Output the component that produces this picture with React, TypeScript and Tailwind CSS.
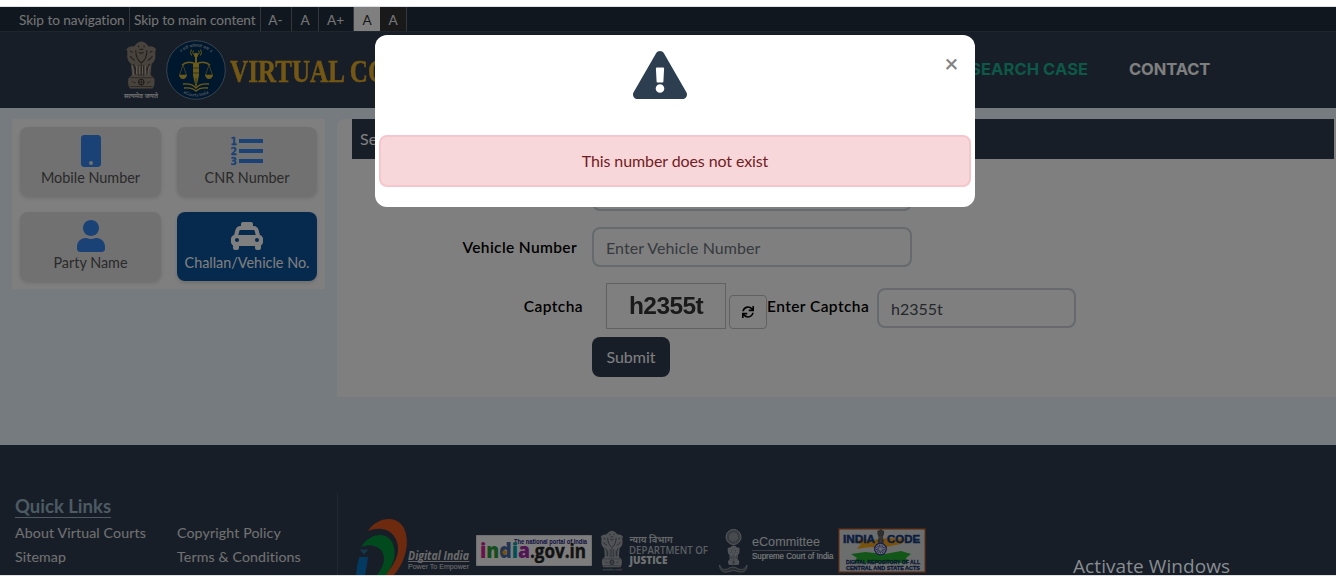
import React from "react";
import { FaExclamationTriangle, FaMobile, FaSync, FaTaxi, FaUser } from "react-icons/fa";

const deva = "'Noto Sans Devanagari','Noto Sans',sans-serif";

function Lions({ fill, dark }: { fill: string; dark: string }) {
  return (
    <g>
      <path d="M12 3 Q17 -1 22 3 L25 6 Q30 5 33 9 Q31 11 32 14 Q33 20 28 24 L27 35 L31 39 Q32 46 29 49 L5 49 Q2 46 3 39 L7 35 L6 24 Q1 20 2 14 Q3 11 1 9 Q4 5 9 6Z" fill={fill} />
      <path d="M11 27v8M14.500 25v11M19.500 25v11M23 27v8M17 24v12" stroke={dark} strokeWidth="1" opacity=".7" />
      <path d="M11 10q0 9 6 13q6-4 6-13M14 5v2M20 5v2M15 9h4M14.500 12q2.500 2 5 0M5 11l3 1M29 11l-3 1M5 16q3 4 5 4M29 16q-3 4-5 4M8 24q3 3 2 10M26 24q-3 3-2 10" fill="none" stroke={dark} strokeWidth="1.200" opacity=".75" />
      <path d="M5 38h24M5 47h24" stroke={dark} opacity=".55" />
      <circle cx="17" cy="42.500" r="3" fill="none" stroke={dark} />
      <path d="M17 39.500v6M14 42.500h6M7 41q2 3 4 2M27 41q-2 3-4 2" stroke={dark} strokeWidth=".8" fill="none" opacity=".8" />
    </g>
  );
}

function Emblem() {
  return (
    <svg width="36" height="62" viewBox="0 0 36 62" className="shrink-0 overflow-visible">
      <g transform="translate(1.500 1.500) scale(.93 .98)"><Lions fill="#93877a" dark="#2c2622" /></g>
      <path d="M8 27q2 5 1.500 9M25.500 27q-2 5-1.500 9M12.500 27v8M15.500 27v8M18.500 27v8M21.500 27v8" stroke="#c9bfb2" strokeWidth=".8" fill="none" />
      <text x="0" y="59" fontSize="7" fontWeight="600" textLength="34" lengthAdjust="spacingAndGlyphs" fill="#e0e0e0" fontFamily={deva}>सत्यमेव जयते</text>
    </svg>
  );
}

function CourtSeal() {
  return (
    <svg width="60" height="61" viewBox="0 0 60 61" className="shrink-0">
      <defs>
        <path id="sealTop" d="M7 30a23 23 0 0 1 46 0" />
        <path id="sealBottom" d="M3.500 30a26.500 26.500 0 0 0 53 0" />
      </defs>
      <circle cx="30" cy="30" r="29.300" fill="#00305c" stroke="#8299ad" strokeWidth=".8" />
      <text fontSize="4" fill="#cdd5dd" fontFamily={deva}><textPath href="#sealTop" startOffset="50%" textAnchor="middle">॥ यतो धर्मस्ततो जयः ॥</textPath></text>
      <text fontSize="4.500" fill="#cdd5dd" fontFamily="Lato,sans-serif"><textPath href="#sealBottom" startOffset="50%" textAnchor="middle">eCourts India</textPath></text>
      <g fill="none" stroke="#d6b634" strokeWidth="1">
        <path d="M27.500 10.500q-1.500 2 0 4M25.500 9.500q-2 3 0 6M32.500 10.500q1.500 2 0 4M34.500 9.500q2 3 0 6" />
        <path d="M16 25q6-5 14-1q8-4 14 1" strokeWidth="1.600" />
        <path d="M17 25l-3.500 10h7zM43 25l-3.500 10h7z" strokeWidth=".6" />
        <path d="M17 44q9-1 13 4q4-5 13-4M18 48q8-1 12 3q4-4 12-3" strokeWidth="1.300" />
      </g>
      <path d="M27 24h6v11l-1.500 7l-1.500 6l-1.500-6l-1.500-7z" fill="#d6b634" />
      <path d="M27 28h6M27 33h6M30 38v6" stroke="#4d5028" strokeWidth=".8" />
      <circle cx="30" cy="15" r="2.200" fill="#d6b634" />
      <path d="M29 14h2v9h-2zM13 35h8q-1 4-4 4t-4-4M39 35h8q-1 4-4 4t-4-4" fill="#d6b634" />
    </svg>
  );
}

function NumberedList() {
  return (
    <svg width="32" height="32" viewBox="0 0 32 32" fill="currentColor">
      <path d="M8 4h24v4H8zM8 14h24v4H8zM8 24h24v4H8z" />
      <g fontFamily="DejaVu Sans,sans-serif" fontWeight="700" fontSize="10" stroke="currentColor" strokeWidth=".3">
        <text x="-.5" y="9.500" textLength="6.500" lengthAdjust="spacingAndGlyphs">1</text>
        <text x="-.5" y="19.500" textLength="6.500" lengthAdjust="spacingAndGlyphs">2</text>
        <text x="-.5" y="29.500" textLength="6.500" lengthAdjust="spacingAndGlyphs">3</text>
      </g>
    </svg>
  );
}

function DigitalIndia() {
  return (
    <svg width="114" height="60" viewBox="356 516 114 60" className="shrink-0 overflow-visible">
      <path d="M368 531C376 519 392 515 401 524C411 535 408 560 393 576H384C398 562 402 547 394 536C388 528 378 527 368 531Z" fill="#dc541c" />
      <path d="M361 547C371 532 386 532 392 542C398 554 393 566 385 576H376C385 566 386 556 381 550C376 545 369 544 361 547Z" fill="#00943c" />
      <path d="M359.500 557H368L365 576H356Q357 564 359.500 557Z" fill="#0874c4" />
      <path d="M360 550l2-1 2 1 2-1 2 1-4 4.500z" fill="#28709a" />
      <text x="408" y="560" fontFamily="Open Sans,sans-serif" fontSize="11.500" fontWeight="700" fontStyle="italic" fill="#d4d4d4" textLength="61" lengthAdjust="spacingAndGlyphs">Digital India</text>
      <path d="M408 561.500h61.500" stroke="#c8c8c8" />
      <text x="408" y="568.500" fontFamily="Liberation Sans,sans-serif" fontSize="7.500" fill="#e0e0e0" textLength="61" lengthAdjust="spacingAndGlyphs">Power To Empower</text>
    </svg>
  );
}

function IndiaGov() {
  return (
    <svg width="116" height="31" viewBox="0 0 116 31" className="shrink-0">
      <path d="M.5.5h115v30H.500z" fill="#fafafa" stroke="#e0e0e0" />
      <text x="38" y="8.500" fontSize="7" fontFamily="Liberation Sans,sans-serif" fontWeight="700" fill="#25207c" textLength="73" lengthAdjust="spacingAndGlyphs">The national portal of India</text>
      <g fontFamily="Open Sans,sans-serif" strokeWidth=".4">
        <text x="4" y="23" fontSize="21" fontWeight="800" textLength="50" lengthAdjust="spacingAndGlyphs">
          <tspan fill="#ce249b">i</tspan><tspan fill="#2c9b38">n</tspan><tspan fill="#4669a4">d</tspan><tspan fill="#00a1ac">i</tspan><tspan fill="#a32ba7">a</tspan>
        </text>
        <text x="54" y="23" fontSize="20" fontWeight="700" fill="#242424" stroke="#242424" textLength="56" lengthAdjust="spacingAndGlyphs">.gov.in</text>
      </g>
      <circle cx="28.500" cy="17.500" r="2.200" fill="#e7a41b" />
    </svg>
  );
}

function DeptJustice() {
  return (
    <svg width="108" height="44" viewBox="600 529 108 44" className="shrink-0 overflow-visible">
      <g transform="translate(600 530) scale(.7 .76)"><Lions fill="#a0a5ab" dark="#303b48" /></g>
      <text x="603" y="571" fontSize="3.500" textLength="19" lengthAdjust="spacingAndGlyphs" fill="#a0a5ab" fontFamily={deva}>सत्यमेव जयते</text>
      <text x="629.500" y="542.500" fontSize="9" fontWeight="600" textLength="43" lengthAdjust="spacingAndGlyphs" fill="#cfd2d5" fontFamily={deva}>न्याय विभाग</text>
      <text x="629" y="553.500" fontSize="10" fontWeight="600" textLength="79" lengthAdjust="spacingAndGlyphs" fill="#b9bec4" fontFamily="Open Sans,sans-serif">DEPARTMENT OF</text>
      <text x="629.500" y="564" fontSize="10" fontWeight="800" textLength="38" lengthAdjust="spacingAndGlyphs" fill="#dfe1e4" fontFamily="Open Sans,sans-serif">JUSTICE</text>
    </svg>
  );
}

function ECommittee() {
  return (
    <svg width="115" height="46" viewBox="719 528 115 46" className="shrink-0 overflow-visible">
      <circle cx="733.500" cy="537" r="7.500" fill="#737b84" stroke="#aab0b6" />
      <circle cx="733.500" cy="537" r="5" fill="#8f969e" stroke="#5c6570" strokeDasharray="1 1" />
      <g transform="translate(727 545) scale(.39 .41)"><Lions fill="#aab0b6" dark="#303b48" /></g>
      <path d="M719.500 565q2 6 8 4q5-4 11 0q6 2 8.500-4q0 8-7.500 7q-6-3-12.500 0q-7 1-7.500-7z" fill="#535d68" stroke="#aab0b6" strokeWidth=".7" />
      <text x="752" y="546" fontSize="12.500" textLength="68" lengthAdjust="spacingAndGlyphs" fill="#e0e3e6" fontFamily="Liberation Sans,sans-serif">eCommittee</text>
      <path d="M752 550.500h68" stroke="#7c8590" />
      <text x="752" y="559" fontSize="8.500" textLength="81.500" lengthAdjust="spacingAndGlyphs" fill="#f2f4f6" stroke="#f2f4f6" strokeWidth=".15" fontFamily="Liberation Sans,sans-serif">Supreme Court of India</text>
    </svg>
  );
}

function IndiaCode() {
  return (
    <svg width="88" height="45" viewBox="838 528 88 45" className="shrink-0 overflow-visible">
      <path d="M838.700 528.700h86.600v43.600h-86.600z" fill="#d9dadb" stroke="#984820" strokeWidth="1.400" />
      <path d="M852 541l10-2 11 1 14-2 21 1-7 5-10 2-9 2-12-1-13 2 4-5z" fill="#f3a51c" />
      <path d="M851 554l14-2 20 2 16-3 10 3-5 4 2 5h-55l4-5z" fill="#27ae31" />
      <text x="843" y="542.500" fontSize="10.500" fontWeight="700" fill="#173c82" stroke="#173c82" strokeWidth=".5" textLength="32" lengthAdjust="spacingAndGlyphs" fontFamily="Liberation Sans,sans-serif">INDIA</text>
      <text x="887" y="542.500" fontSize="10.500" fontWeight="700" fill="#173c82" stroke="#173c82" strokeWidth=".5" textLength="33" lengthAdjust="spacingAndGlyphs" fontFamily="Liberation Sans,sans-serif">CODE</text>
      <g transform="translate(877 529) scale(.22 .28)"><Lions fill="#4e4e4e" dark="#c8c8c8" /></g>
      <circle cx="880.500" cy="549" r="5.800" fill="#dadce4" stroke="#2e38a0" strokeWidth="1.300" />
      <circle cx="880.500" cy="549" r="3" fill="none" stroke="#2e38a0" strokeWidth="3" strokeDasharray=".6 .8" />
      <text x="846" y="563.500" fontSize="5.800" fontWeight="700" fill="#132e66" stroke="#132e66" strokeWidth=".3" textLength="74" lengthAdjust="spacingAndGlyphs" fontFamily="Liberation Sans,sans-serif">DIGITAL REPOSITORY OF ALL</text>
      <text x="846" y="569.800" fontSize="5.800" fontWeight="700" fill="#132e66" stroke="#132e66" strokeWidth=".3" textLength="74" lengthAdjust="spacingAndGlyphs" fontFamily="Liberation Sans,sans-serif">CENTRAL AND STATE ACTS</text>
    </svg>
  );
}

function Tile({ icon, label, active }: { icon: React.ReactNode; label: string; active?: boolean }) {
  return (
    <button className={`flex h-[69px] flex-col items-center rounded-lg pt-2 shadow-[0_2px_4px_rgba(0,0,0,0.15)] ${active ? "bg-[#0c529c] text-white" : "bg-[#e2e2e2] text-[#3684ee]"}`}>
      <span className="flex h-8 items-center">{icon}</span>
      <span className={`mt-[1px] whitespace-nowrap text-[14.4px] leading-[20px] ${active ? "text-white" : "text-[#555]"}`}>{label}</span>
    </button>
  );
}

export default function App() {
  return (
    <div className="flex h-[580px] w-[1336px] flex-col overflow-hidden bg-white font-['Lato',sans-serif]">
      <div className="h-[7px] shrink-0 border-b border-[#dfe2e4]" />
      <div className="relative flex h-[568px] shrink-0 flex-col overflow-hidden bg-[#ecf6fe]">
        <div className="flex h-[25px] shrink-0 border-b border-[#3e4c58] bg-[#202f3e] pl-[14px] text-[13.600px] leading-[26px] text-[#e8e8e8]">
          <a className="w-[116px] whitespace-nowrap border-r border-[#68717b] pl-[5px] tracking-[-0.03px]">Skip to navigation</a>
          <a className="w-[131px] whitespace-nowrap border-r border-[#68717b] pl-1 tracking-[-0.06px]">Skip to main content</a>
          <a className="w-[31px] border-r border-[#68717b] pr-px text-center">A-</a>
          <a className="w-[27px] border-r border-[#68717b] text-center">A</a>
          <a className="w-[35px] border-r border-[#68717b] pr-px text-center">A+</a>
          <a className="h-6 w-[26px] bg-white text-center text-[#333]">A</a>
          <a className="h-6 w-[27px] border-r border-[#68717b] bg-[#333] text-center">A</a>
        </div>
        <header className="flex h-[76px] shrink-0 items-center bg-[#2e3d50] pl-[124px]">
          <Emblem />
          <div className="ml-[6px]"><CourtSeal /></div>
          <div className="ml-[4px] w-[659px] origin-left scale-x-[0.81] whitespace-nowrap pt-[4px] font-['Liberation_Serif',serif] text-[31px] font-bold text-[#e9ae28] [-webkit-text-stroke:0.5px_#e9ae28]">VIRTUAL COURTS</div>
          <nav className="ml-[81px] flex items-center whitespace-nowrap pb-[2px] font-['Inter',sans-serif] text-[16.500px] font-bold">
            <a className="w-[159px] tracking-[0.1px] text-[#1ab08c]">SEARCH CASE</a>
            <a className="tracking-[-0.1px] text-white">CONTACT</a>
          </nav>
        </header>
        <main className="flex h-[337px] shrink-0 items-start pl-3 pt-[11px]">
          <section className="grid h-[170px] w-[313px] grid-cols-[141px_140px] content-start gap-4 bg-white p-2">
            <Tile icon={<FaMobile size={32} />} label="Mobile Number" />
            <Tile icon={<NumberedList />} label="CNR Number" />
            <Tile icon={<FaUser size={32} />} label="Party Name" />
            <Tile active icon={<FaTaxi size={32} />} label="Challan/Vehicle No." />
          </section>
          <section className="ml-3 flex h-[278px] flex-1 flex-col rounded-tl-lg bg-white pl-[15px] pr-[2px] text-[16px] text-black">
            <h1 className="h-10 bg-[#2e3d50] pl-2 leading-10 text-white">Search by Challan/Vehicle No.</h1>
            <div className="mt-[12px] flex h-10">
              <label className="w-[225px] pt-2 text-right font-bold leading-6">Challan Number</label>
              <input aria-label="Challan Number" className="ml-[15px] h-10 w-[320px] rounded-lg border-2 border-[#ced4da]" />
            </div>
            <div className="mt-4 flex h-10">
              <label className="w-[225px] pt-2 text-right text-[15.500px] font-semibold leading-6 tracking-[0.36px]">Vehicle Number</label>
              <input placeholder="Enter Vehicle Number" className="ml-[15px] h-10 w-[320px] rounded-lg border-2 border-[#ced4da] px-3 text-[16px] tracking-[0.06px] placeholder:text-[#6c757d] placeholder:opacity-100" />
            </div>
            <div className="mt-4 flex h-[54px]">
              <label className="w-[231px] pt-[11px] text-right text-[15.500px] font-semibold leading-6 tracking-[0.42px]">Captcha</label>
              <div className="ml-[23px] flex h-[46px] w-[120px] items-center justify-center border border-[#c3c3c3] pt-px font-['Liberation_Sans',sans-serif] text-[24.500px] font-bold tracking-[-0.6px] text-[#343434]"><span className="blur-[0.4px]">h2355t</span></div>
              <button aria-label="Refresh" className="ml-[3px] mt-3 flex h-[34px] w-[38px] items-center justify-center rounded border border-[#c3c3c3]"><FaSync size={12} className="-ml-px" /></button>
              <label className="w-[102px] whitespace-nowrap pt-[11px] text-[15.500px] font-semibold leading-6 tracking-[0.42px]">Enter Captcha</label>
              <input defaultValue="h2355t" className="ml-2 mt-[5px] h-10 w-[199px] rounded-lg border-2 border-[#ced4da] px-3 text-[#495057]" />
            </div>
            <button className="ml-[240px] h-10 w-[78px] shrink-0 rounded-lg bg-[#2e3d50] text-white">Submit</button>
          </section>
        </main>
        <footer className="flex h-[130px] shrink-0 bg-[#2e3d50]">
          <div className="mt-12 h-[82px] w-[338px] border-r border-[#435163] pl-[15px]">
            <h2 className="mt-[2px] w-fit border-b border-[#99b4c6] text-[18.500px] font-bold leading-[22px] text-[#99b4c6]">Quick Links</h2>
            <div className="mt-[3px] grid grid-cols-[162px_1fr] whitespace-nowrap text-[14.200px] leading-6 tracking-[0.12px] text-[#e2e2e2]">
              <a>About Virtual Courts</a><a>Copyright Policy</a>
              <a>Sitemap</a><a>Terms &amp; Conditions</a>
            </div>
          </div>
          <div className="flex h-full items-start pl-[18px] pt-[71px]">
            <DigitalIndia />
            <div className="ml-[6px] mt-[19px]"><IndiaGov /></div>
            <div className="ml-2 mt-[13px]"><DeptJustice /></div>
            <div className="ml-[11px] mt-3"><ECommittee /></div>
            <div className="ml-1 mt-3"><IndiaCode /></div>
          </div>
        </footer>
        <div className="absolute inset-0 bg-black/50" />
        <div role="dialog" className="absolute left-[375px] top-[28px] flex h-[172px] w-[600px] flex-col rounded-xl bg-white px-1">
          <div className="flex h-[100px] justify-center pr-[31px] pt-4">
            <FaExclamationTriangle size={54} className="-mt-[3px] text-[#2c3e50]" />
          </div>
          <button aria-label="Close" className="absolute right-[17px] top-[16px] h-6 text-[23px] leading-6 text-[#808080] [-webkit-text-stroke:0.4px_#808080]">×</button>
          <div className="flex h-[52px] items-center justify-center rounded-lg border-2 border-[#f5c6cb] bg-[#f8d7da] text-[16px] tracking-[-0.1px] text-[#721c24]">This number does not exist</div>
        </div>
        <div className="absolute left-[1073px] top-[545px] whitespace-nowrap font-['Open_Sans',sans-serif] text-[19px] leading-7 tracking-[0.08px] text-[#898d91]">Activate Windows</div>
      </div>
      <div className="h-[5px] shrink-0 border-t border-[#dfe2e4]" />
    </div>
  );
}
